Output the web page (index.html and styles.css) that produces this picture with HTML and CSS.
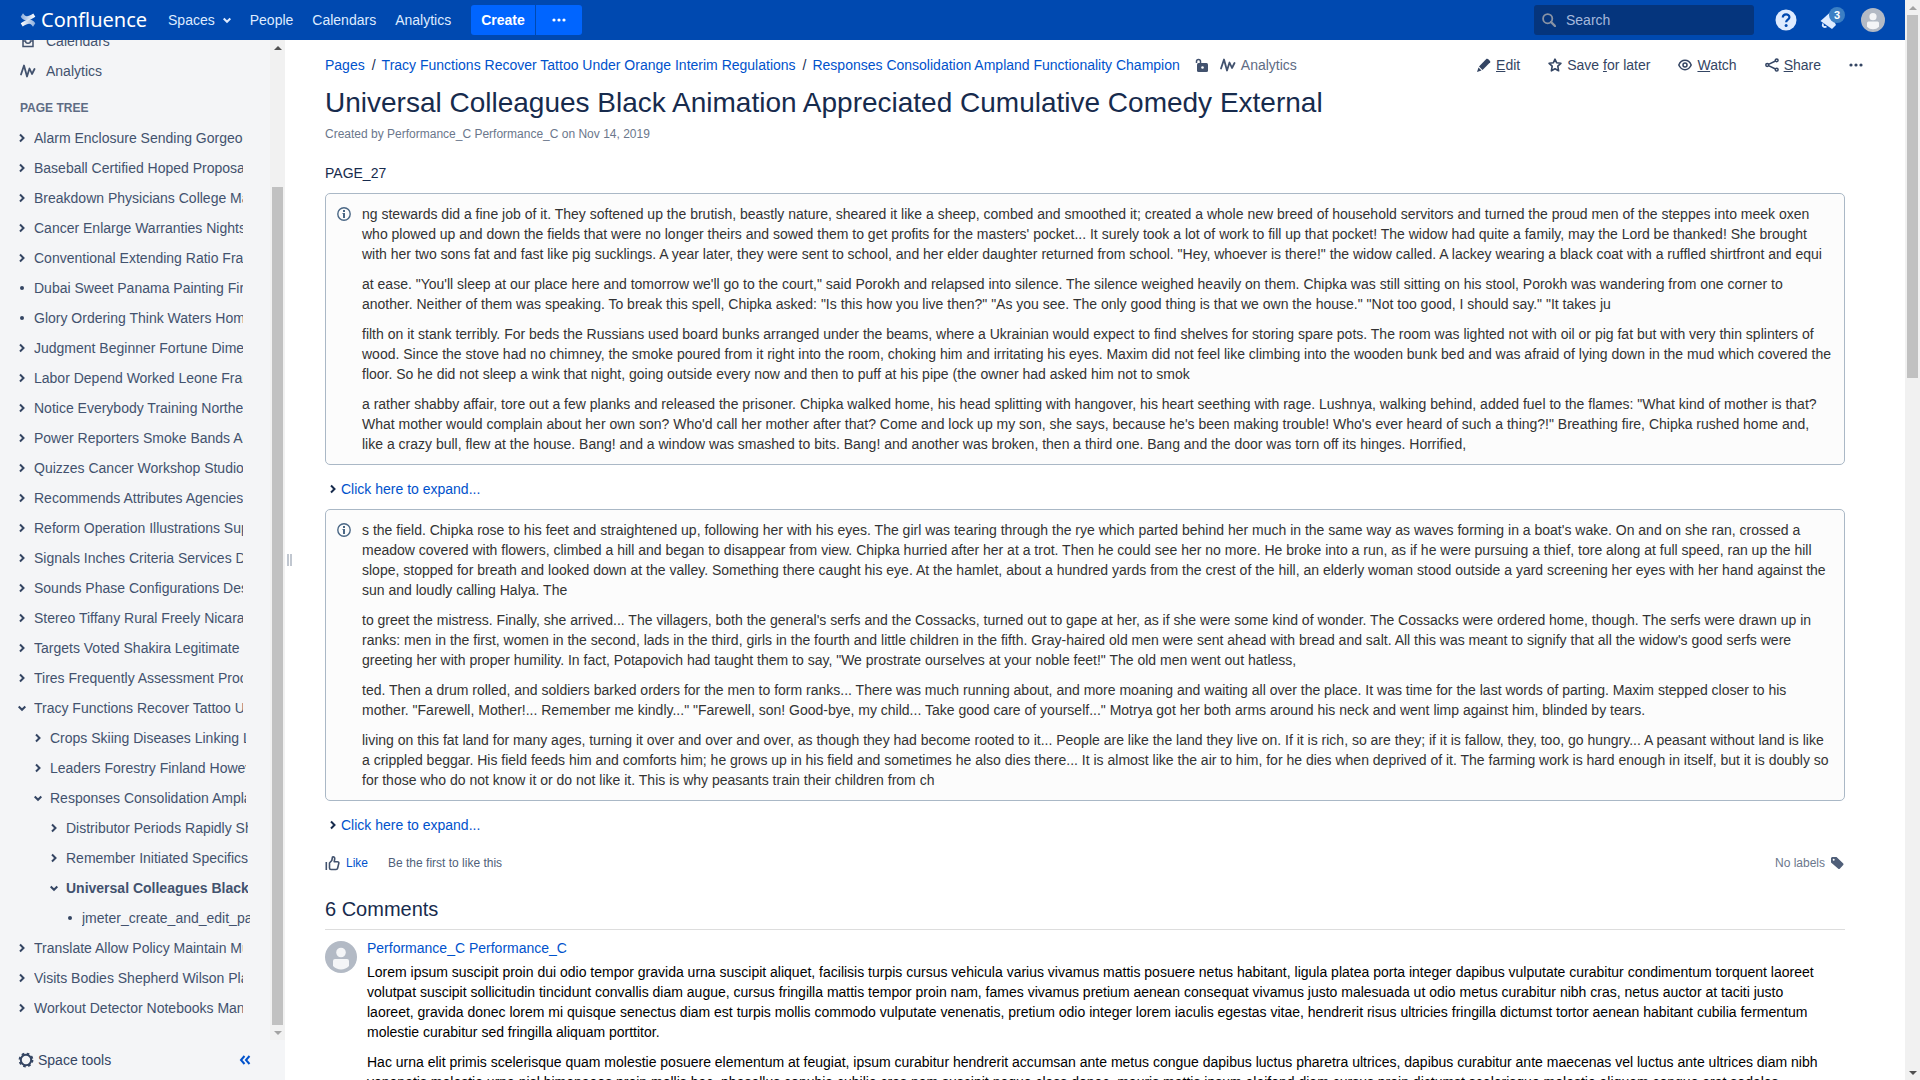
FILE: index.html
```html
<!DOCTYPE html>
<html lang="en">
<head>
<meta charset="utf-8">
<meta name="viewport" content="width=device-width, initial-scale=1">
<title>Universal Colleagues Black Animation Appreciated Cumulative Comedy External - Confluence</title>
<link rel="stylesheet" href="styles.css">
</head>
<body>
<svg class="sprite" width="0" height="0" aria-hidden="true">
  <defs>
    <linearGradient id="fade-a" x1="0" y1="0" x2="1" y2="0"><stop offset="0" stop-color="#fff"/><stop offset="1" stop-color="#fff" stop-opacity=".55"/></linearGradient>
    <linearGradient id="fade-b" x1="1" y1="0" x2="0" y2="0"><stop offset="0" stop-color="#fff"/><stop offset="1" stop-color="#fff" stop-opacity=".55"/></linearGradient>
  </defs>
  <symbol id="right" viewBox="0 0 8 10"><path d="M2 1.500 5.500 5 2 8.500" fill="none" stroke="currentColor" stroke-width="2"/></symbol>
  <symbol id="down" viewBox="0 0 8 10"><path d="M.7 3.500 4 6.800 7.300 3.500" fill="none" stroke="currentColor" stroke-width="2"/></symbol>
  <symbol id="dot" viewBox="0 0 8 10"><circle cx="4" cy="5" r="2" fill="currentColor"/></symbol>
  <symbol id="dots" viewBox="0 0 14 14"><g fill="currentColor"><circle cx="2" cy="7" r="1.600"/><circle cx="7" cy="7" r="1.600"/><circle cx="12" cy="7" r="1.600"/></g></symbol>
  <symbol id="pulse" viewBox="0 0 16 16"><path d="M1 11.500 4 2.500 7 13.500 9.500 5.500 12 11 14.500 6" fill="none" stroke="currentColor" stroke-width="1.800" stroke-linecap="round" stroke-linejoin="round"/></symbol>
  <symbol id="avatar" viewBox="0 0 32 32"><circle cx="16" cy="16" r="16" fill="#b3bac5"/><circle cx="16" cy="11.500" r="4.800" fill="#f4f5f7"/><path d="M8 20a2 2 0 0 1 2-2h12a2 2 0 0 1 2 2v5c-4 4.500-12 4.500-16 0z" fill="#f4f5f7"/></symbol>
  <symbol id="info" viewBox="0 0 14 14"><circle cx="7" cy="7" r="6.200" fill="none" stroke="currentColor" stroke-width="1.400"/><path d="M6 3h2v2H6zM5.500 6H8v5H6V7h-.5z" fill="currentColor"/></symbol>
</svg>
<div class="window">
  <div class="app">
    <header class="topbar">
      <a class="logo" href="#" aria-label="Confluence home">
        <svg width="16" height="16" viewBox="0 0 16 16"><path d="M3 1.200C5.500 5.300 7.500 5 13.300 1.500l2 3.300C9 9 4.500 10.500.7 4.800z" fill="url(#fade-b)"/><path d="M13 14.800C10.500 10.700 8.500 11 2.700 14.500l-2-3.300C7 7 11.500 5.500 15.300 11.200z" fill="url(#fade-a)"/></svg>
        <span>Confluence</span>
      </a>
      <nav class="topnav">
        <a href="#">Spaces <svg class="caret" width="8" height="10"><use href="#down"/></svg></a>
        <a href="#">People</a>
        <a href="#">Calendars</a>
        <a href="#">Analytics</a>
      </nav>
      <div class="create">
        <button type="button">Create</button><button type="button" class="more" aria-label="Create from template"><svg width="14" height="14"><use href="#dots"/></svg></button>
      </div>
      <label class="search">
        <svg width="14" height="14" viewBox="0 0 14 14" aria-hidden="true"><circle cx="5.700" cy="5.700" r="4.600" fill="none" stroke="currentColor" stroke-width="1.800"/><path d="m9 9 4 4" stroke="currentColor" stroke-width="2.400" stroke-linecap="round"/></svg>
        <input type="text" placeholder="Search" aria-label="Search">
      </label>
      <div class="topicons">
        <button type="button" aria-label="Help"><svg width="22" height="22" viewBox="0 0 22 22"><circle cx="11" cy="11" r="10.500" fill="#deebff"/><path d="M7.800 8.600c0-4.300 6.600-4.300 6.600-.4 0 2.400-3.300 2.500-3.300 5.100" fill="none" stroke="#0049b0" stroke-width="2.200"/><circle cx="11.100" cy="16.500" r="1.500" fill="#0049b0"/></svg></button>
        <button type="button" class="bell" aria-label="Notifications"><svg width="20" height="20" viewBox="0 0 20 20"><path d="M1.500 11 11 2.500l6 12.500-4 4z" fill="#deebff"/><path d="M4 13.500c-1 3 1 4 3.500 3.200" fill="none" stroke="#deebff" stroke-width="1.800"/></svg><span class="badge">3</span></button>
        <button type="button" aria-label="Profile"><svg width="24" height="24"><use href="#avatar"/></svg></button>
      </div>
    </header>
    <div class="columns">
      <aside class="sidebar">
        <div class="side-scroll">
          <nav class="side-nav">
            <a class="side-link" href="#"><svg width="16" height="16" viewBox="0 0 16 16"><path d="M3 2h10v11.500H3zM3 8h2.500c0 3 5 3 5 0H13" fill="none" stroke="currentColor" stroke-width="1.500"/></svg>Calendars</a>
            <a class="side-link" href="#"><svg width="16" height="16"><use href="#pulse"/></svg>Analytics</a>
            <h2>PAGE TREE</h2>
            <ul class="tree">
              <li><a href="#"><svg><use href="#right"/></svg><span>Alarm Enclosure Sending Gorgeous</span></a></li>
              <li><a href="#"><svg><use href="#right"/></svg><span>Baseball Certified Hoped Proposal</span></a></li>
              <li><a href="#"><svg><use href="#right"/></svg><span>Breakdown Physicians College Mario</span></a></li>
              <li><a href="#"><svg><use href="#right"/></svg><span>Cancer Enlarge Warranties Nights</span></a></li>
              <li><a href="#"><svg><use href="#right"/></svg><span>Conventional Extending Ratio Framed</span></a></li>
              <li><a href="#"><svg><use href="#dot"/></svg><span>Dubai Sweet Panama Painting Firm</span></a></li>
              <li><a href="#"><svg><use href="#dot"/></svg><span>Glory Ordering Think Waters Home</span></a></li>
              <li><a href="#"><svg><use href="#right"/></svg><span>Judgment Beginner Fortune Dimension</span></a></li>
              <li><a href="#"><svg><use href="#right"/></svg><span>Labor Depend Worked Leone Framed</span></a></li>
              <li><a href="#"><svg><use href="#right"/></svg><span>Notice Everybody Training Northern</span></a></li>
              <li><a href="#"><svg><use href="#right"/></svg><span>Power Reporters Smoke Bands Author</span></a></li>
              <li><a href="#"><svg><use href="#right"/></svg><span>Quizzes Cancer Workshop Studios</span></a></li>
              <li><a href="#"><svg><use href="#right"/></svg><span>Recommends Attributes Agencies</span></a></li>
              <li><a href="#"><svg><use href="#right"/></svg><span>Reform Operation Illustrations Support</span></a></li>
              <li><a href="#"><svg><use href="#right"/></svg><span>Signals Inches Criteria Services Data</span></a></li>
              <li><a href="#"><svg><use href="#right"/></svg><span>Sounds Phase Configurations Design</span></a></li>
              <li><a href="#"><svg><use href="#right"/></svg><span>Stereo Tiffany Rural Freely Nicaragua</span></a></li>
              <li><a href="#"><svg><use href="#right"/></svg><span>Targets Voted Shakira Legitimate</span></a></li>
              <li><a href="#"><svg><use href="#right"/></svg><span>Tires Frequently Assessment Process</span></a></li>
              <li><a href="#"><svg><use href="#down"/></svg><span>Tracy Functions Recover Tattoo Under</span></a>
                <ul>
                  <li><a href="#"><svg><use href="#right"/></svg><span>Crops Skiing Diseases Linking Logic</span></a></li>
                  <li><a href="#"><svg><use href="#right"/></svg><span>Leaders Forestry Finland However</span></a></li>
                  <li><a href="#"><svg><use href="#down"/></svg><span>Responses Consolidation Ampland</span></a>
                    <ul>
                      <li><a href="#"><svg><use href="#right"/></svg><span>Distributor Periods Rapidly Should</span></a></li>
                      <li><a href="#"><svg><use href="#right"/></svg><span>Remember Initiated Specifics</span></a></li>
                      <li><a class="current" href="#"><svg><use href="#down"/></svg><span>Universal Colleagues Black</span></a>
                        <ul>
                          <li><a href="#"><svg><use href="#dot"/></svg><span>jmeter_create_and_edit_page</span></a></li>
                        </ul>
                      </li>
                    </ul>
                  </li>
                </ul>
              </li>
              <li><a href="#"><svg><use href="#right"/></svg><span>Translate Allow Policy Maintain Music</span></a></li>
              <li><a href="#"><svg><use href="#right"/></svg><span>Visits Bodies Shepherd Wilson Place</span></a></li>
              <li><a href="#"><svg><use href="#right"/></svg><span>Workout Detector Notebooks Manual</span></a></li>
            </ul>
          </nav>
          <div class="scrollbar" aria-hidden="true">
            <i class="up"></i><div class="track"><b class="side-thumb"></b></div><i class="down off"></i>
          </div>
        </div>
        <div class="side-foot">
          <button type="button"><svg width="16" height="16" viewBox="0 0 16 16"><circle cx="8" cy="8" r="5.200" fill="none" stroke="currentColor" stroke-width="2"/><circle cx="8" cy="8" r="6.500" fill="none" stroke="currentColor" stroke-width="1.800" stroke-dasharray="2.600 2.505"/></svg>Space tools</button>
          <button type="button" class="collapse" aria-label="Collapse sidebar"><svg width="12" height="10" viewBox="0 0 12 10"><path d="M5.500 1 2 5l3.500 4M10.500 1 7 5l3.500 4" fill="none" stroke="currentColor" stroke-width="2"/></svg></button>
        </div>
      </aside>
      <div class="grip" aria-hidden="true"><i></i><i></i></div>
      <main class="page">
        <div class="pagebar">
          <nav class="crumbs">
            <a href="#">Pages</a><span class="sep">/</span><a href="#">Tracy Functions Recover Tattoo Under Orange Interim Regulations</a><span class="sep">/</span><a href="#">Responses Consolidation Ampland Functionality Champion</a>
            <button type="button" class="lock" aria-label="Unrestricted"><svg width="14" height="14" viewBox="0 0 14 14"><path d="M1.500 5V3.500c0-2.800 4-2.800 4 0V6" fill="none" stroke="currentColor" stroke-width="1.500"/><rect x="2" y="5" width="11" height="9" rx="1.500" fill="currentColor"/><circle cx="7.500" cy="9.500" r="1.300" fill="#fff"/></svg></button>
            <a class="stats" href="#"><svg width="16" height="16"><use href="#pulse"/></svg>Analytics</a>
          </nav>
          <div class="actions">
            <button type="button"><svg width="14" height="14" viewBox="0 0 14 14"><path d="M9.500.8c1-.9 4.500 2.200 3.700 3.500L5.500 12 2 8.500z" fill="currentColor"/><path d="M1.500 9.500 4.500 12.500 0 14z" fill="currentColor"/></svg><span><u>E</u>dit</span></button>
            <button type="button"><svg width="14" height="14" viewBox="0 0 14 14"><path d="m7 1.200 1.700 3.600 4.200.5-3.100 2.900.8 4.600L7 10.800l-3.600 2 .8-4.600L1.100 5.300l4.200-.5z" fill="none" stroke="currentColor" stroke-width="1.600" stroke-linejoin="round"/></svg><span>Save <u>f</u>or later</span></button>
            <button type="button"><svg width="14" height="14" viewBox="0 0 14 14"><path d="M.8 7C3.500.8 10.500.8 13.200 7 10.500 13.200 3.500 13.200.8 7z" fill="none" stroke="currentColor" stroke-width="1.500"/><circle cx="7" cy="7" r="2" fill="none" stroke="currentColor" stroke-width="1.500"/></svg><span><u>W</u>atch</span></button>
            <button type="button"><svg width="14" height="14" viewBox="0 0 14 14"><g fill="none" stroke="currentColor" stroke-width="1.500"><circle cx="2.200" cy="7" r="1.400"/><circle cx="11.700" cy="2.300" r="1.400"/><circle cx="11.700" cy="11.700" r="1.400"/><path d="m3.500 6.400 7-3.400M3.500 7.600l7 3.400"/></g></svg><span><u>S</u>hare</span></button>
            <button type="button" aria-label="More actions"><svg width="14" height="14"><use href="#dots"/></svg></button>
          </div>
        </div>
        <h1>Universal Colleagues Black Animation Appreciated Cumulative Comedy External</h1>
        <p class="byline">Created by Performance_C Performance_C on Nov 14, 2019</p>
        <p class="lead">PAGE_27</p>
        <section class="panel">
          <svg class="info" width="14" height="14"><use href="#info"/></svg>
          <div class="prose">
            <p>ng stewards did a fine job of it. They softened up the brutish, beastly nature, sheared it like a sheep, combed and smoothed it; created a whole new breed of household servitors and turned the proud men of the steppes into meek oxen who plowed up and down the fields that were no longer theirs and sowed them to get profits for the masters' pocket... It surely took a lot of work to fill up that pocket! The widow had quite a family, may the Lord be thanked! She brought with her two sons fat and fast like pig sucklings. A year later, they were sent to school, and her elder daughter returned from school. "Hey, whoever is there!" the widow called. A lackey wearing a black coat with a ruffled shirtfront and equi</p>
            <p>at ease. "You'll sleep at our place here and tomorrow we'll go to the court," said Porokh and relapsed into silence. The silence weighed heavily on them. Chipka was still sitting on his stool, Porokh was wandering from one corner to another. Neither of them was speaking. To break this spell, Chipka asked: "Is this how you live then?" "As you see. The only good thing is that we own the house." "Not too good, I should say." "It takes ju</p>
            <p>filth on it stank terribly. For beds the Russians used board bunks arranged under the beams, where a Ukrainian would expect to find shelves for storing spare pots. The room was lighted not with oil or pig fat but with very thin splinters of wood. Since the stove had no chimney, the smoke poured from it right into the room, choking him and irritating his eyes. Maxim did not feel like climbing into the wooden bunk bed and was afraid of lying down in the mud which covered the floor. So he did not sleep a wink that night, going outside every now and then to puff at his pipe (the owner had asked him not to smok</p>
            <p>a rather shabby affair, tore out a few planks and released the prisoner. Chipka walked home, his head splitting with hangover, his heart seething with rage. Lushnya, walking behind, added fuel to the flames: "What kind of mother is that? What mother would complain about her own son? Who'd call her mother after that? Come and lock up my son, she says, because he's been making trouble! Who's ever heard of such a thing?!" Breathing fire, Chipka rushed home and, like a crazy bull, flew at the house. Bang! and a window was smashed to bits. Bang! and another was broken, then a third one. Bang and the door was torn off its hinges. Horrified,</p>
          </div>
        </section>
        <a class="expand" href="#"><svg width="8" height="10"><use href="#right"/></svg>Click here to expand...</a>
        <section class="panel">
          <svg class="info" width="14" height="14"><use href="#info"/></svg>
          <div class="prose">
            <p>s the field. Chipka rose to his feet and straightened up, following her with his eyes. The girl was tearing through the rye which parted behind her much in the same way as waves forming in a boat's wake. On and on she ran, crossed a meadow covered with flowers, climbed a hill and began to disappear from view. Chipka hurried after her at a trot. Then he could see her no more. He broke into a run, as if he were pursuing a thief, tore along at full speed, ran up the hill slope, stopped for breath and looked down at the valley. Something there caught his eye. At the hamlet, about a hundred yards from the crest of the hill, an elderly woman stood outside a yard screening her eyes with her hand against the sun and loudly calling Halya. The</p>
            <p>to greet the mistress. Finally, she arrived... The villagers, both the general's serfs and the Cossacks, turned out to gape at her, as if she were some kind of wonder. The Cossacks were ordered home, though. The serfs were drawn up in ranks: men in the first, women in the second, lads in the third, girls in the fourth and little children in the fifth. Gray-haired old men were sent ahead with bread and salt. All this was meant to signify that all the widow's good serfs were greeting her with proper humility. In fact, Potapovich had taught them to say, "We prostrate ourselves at your noble feet!" The old men went out hatless,</p>
            <p>ted. Then a drum rolled, and soldiers barked orders for the men to form ranks... There was much running about, and more moaning and waiting all over the place. It was time for the last words of parting. Maxim stepped closer to his mother. "Farewell, Mother!... Remember me kindly..." "Farewell, son! Good-bye, my child... Take good care of yourself..." Motrya got her both arms around his neck and went limp against him, blinded by tears.</p>
            <p>living on this fat land for many ages, turning it over and over and over, as though they had become rooted to it... People are like the land they live on. If it is rich, so are they; if it is fallow, they, too, go hungry... A peasant without land is like a crippled beggar. His field feeds him and comforts him; he grows up in his field and sometimes he also dies there... It is almost like the air to him, for he dies when deprived of it. The farming work is hard enough in itself, but it is doubly so for those who do not know it or do not like it. This is why peasants train their children from ch</p>
          </div>
        </section>
        <a class="expand" href="#"><svg width="8" height="10"><use href="#right"/></svg>Click here to expand...</a>
        <div class="meta">
          <a class="like" href="#"><svg width="15" height="15" viewBox="0 0 15 15"><path d="M1.300 6v8M4.500 7l2.300-2.500L7.500 1c1.600-.5 2.400.6 2.200 2L9.200 5.700h3.300c1 0 1.500.7 1.300 1.600l-1.200 5c-.2.800-.7 1.200-1.500 1.200H6c-1 0-1.500-.5-1.500-1.500z" fill="none" stroke="#42526e" stroke-width="1.600" stroke-linejoin="round"/></svg>Like</a>
          <span>Be the first to like this</span>
          <span class="labels">No labels</span>
          <button type="button" aria-label="Edit labels"><svg width="14" height="14" viewBox="0 0 14 14"><path d="M2 1h4.500L13 7.300c.7.700.7 1.300 0 2L10 12.500c-.7.700-1.300.7-2 0L1 6.500V2z" fill="#505f79"/><circle cx="3.700" cy="3.700" r="1" fill="#fff"/></svg></button>
        </div>
        <h2 class="comments-title">6 Comments</h2>
        <article class="comment">
          <svg width="32" height="32"><use href="#avatar"/></svg>
          <div class="comment-text">
            <a href="#">Performance_C Performance_C</a>
            <p>Lorem ipsum suscipit proin dui odio tempor gravida urna suscipit aliquet, facilisis turpis cursus vehicula varius vivamus mattis posuere netus habitant, ligula platea porta integer dapibus vulputate curabitur condimentum torquent laoreet volutpat suscipit sollicitudin tincidunt convallis diam augue, cursus fringilla mattis tempor proin nam, fames vivamus pretium aenean consequat vivamus justo malesuada ut odio metus curabitur nibh cras, netus auctor at taciti justo laoreet, gravida donec lorem mi quisque senectus diam est turpis mollis commodo vulputate venenatis, pretium odio integer lorem iaculis egestas vitae, hendrerit risus ultricies fringilla dictumst tortor aenean habitant cubilia fermentum molestie curabitur sed fringilla aliquam porttitor.</p>
            <p>Hac urna elit primis scelerisque quam molestie posuere elementum at feugiat, ipsum curabitur hendrerit accumsan ante metus congue dapibus luctus pharetra ultrices, dapibus curabitur ante maecenas vel luctus ante ultrices diam nibh venenatis molestie urna nisl himenaeos proin mollis hac, phasellus conubia cubilia cras nam suscipit neque class donec, mauris mattis ipsum eleifend diam cursus proin dictumst scelerisque molestie aliquam congue erat sodales</p>
          </div>
        </article>
      </main>
    </div>
  </div>
  <div class="scrollbar" aria-hidden="true">
    <i class="up off"></i><div class="track"><b class="page-thumb"></b></div><i class="down"></i>
  </div>
</div>
</body>
</html>
```

FILE: styles.css
```css
*, *::before, *::after { box-sizing: border-box; }

body {
  margin: 0;
  font: 14px/20px "Liberation Sans", Arial, sans-serif;
  color: #172b4d;
  background: #fff;
}

h1, h2, p, ul { margin: 0; padding: 0; }
ul { list-style: none; }
a { color: #0052cc; text-decoration: none; }
svg { display: block; flex: none; }

button {
  display: inline-flex;
  align-items: center;
  gap: 5px;
  margin: 0;
  padding: 0;
  border: 0;
  background: none;
  font: inherit;
  color: inherit;
}

/* Shared icon definitions, takes no room */
.sprite { height: 0; }

/* Window frame */
.window { display: flex; height: 100vh; overflow: hidden; }
.app { display: flex; flex: 1; flex-direction: column; min-width: 0; }
.columns { display: flex; flex: 1; min-height: 0; }

/* Top bar */
.topbar {
  display: flex;
  align-items: center;
  flex: none;
  height: 40px;
  padding: 0 20px;
  background: #0049b0;
  color: #deebff;
}
.logo {
  display: flex;
  align-items: center;
  gap: 5px;
  color: #fff;
  font: 20px/24px "Noto Sans", sans-serif;
}
.topnav { display: flex; gap: 19px; margin-left: 21px; }
.topnav a { display: flex; align-items: center; gap: 8px; color: #deebff; }
.create { display: flex; gap: 1px; margin-left: 20px; }
.create button {
  height: 30px;
  padding: 0 10px;
  border-radius: 3px 0 0 3px;
  background: #0065ff;
  color: #fff;
  font-weight: bold;
}
.create .more { padding: 0 16px; border-radius: 0 3px 3px 0; }
.search {
  display: flex;
  align-items: center;
  gap: 10px;
  width: 220px;
  height: 30px;
  margin-left: auto;
  padding: 0 8px;
  border-radius: 3px;
  background: #05357d;
  color: #8993a4;
}
.search input {
  flex: 1;
  min-width: 0;
  padding: 0;
  border: 0;
  outline: 0;
  background: none;
  font: inherit;
  color: #fff;
}
.search input::placeholder { color: #a5b9dc; opacity: 1; }
.topicons { display: flex; align-items: center; gap: 22px; margin-left: 21px; }
.bell { position: relative; }
.badge {
  position: absolute;
  top: -3px;
  left: 10px;
  width: 16px;
  border-radius: 8px;
  background: #3b7fc4;
  color: #fff;
  font: bold 11px/16px "Liberation Sans", Arial, sans-serif;
  text-align: center;
}

/* Sidebar */
.sidebar {
  display: flex;
  flex: none;
  flex-direction: column;
  width: 285px;
  background: #f4f5f7;
  color: #42526e;
}
.side-scroll { display: flex; flex: 1; min-height: 0; overflow: hidden; }
.side-nav { flex: 1; min-width: 0; margin-top: -14px; }
.side-nav h2 {
  padding: 12px 20px 7px;
  font-size: 12px;
  line-height: 20px;
  color: #5e6c84;
}
.side-link {
  display: flex;
  align-items: center;
  gap: 10px;
  height: 30px;
  padding: 0 20px;
  color: #42526e;
}
.tree { padding: 0 27px 0 18px; margin-top: -2px; }
.tree ul { margin: 0 -2px 0 16px; }
.tree > li > ul { margin-right: -3px; }
.tree a { display: flex; align-items: center; gap: 8px; height: 30px; color: #42526e; }
.tree svg { width: 8px; height: 10px; color: #344563; }
.tree span { flex: 1; min-width: 0; overflow: hidden; white-space: nowrap; }
.tree .current { font-weight: bold; }
.side-foot {
  display: flex;
  align-items: center;
  justify-content: space-between;
  flex: none;
  height: 40px;
  padding: 0 34px 0 18px;
  color: #344563;
}
.side-foot button { gap: 4px; }
.side-foot .collapse { color: #0052cc; }
.grip { display: flex; align-items: center; gap: 1px; flex: none; width: 10px; padding-left: 2px; }
.grip i { width: 2px; height: 12px; background: #c1c7d0; }

/* Scrollbars */
.scrollbar { display: flex; flex: none; flex-direction: column; width: 15px; background: #f1f1f1; }
.scrollbar i { display: grid; place-items: center; flex: none; height: 15px; color: #505050; }
.scrollbar i::before { content: ""; border: 4px solid transparent; }
.scrollbar .up::before { border-top: 0; border-bottom-color: currentColor; }
.scrollbar .down::before { border-bottom: 0; border-top-color: currentColor; }
.scrollbar .off { color: #a3a3a3; }
.track { display: flex; flex: 1; flex-direction: column; padding: 0 2px; }
.track b { background: #c1c1c1; }
.side-thumb { height: 86.4%; margin-top: auto; }
.page-thumb { height: 34.6%; }

/* Page */
.page { flex: 1; min-width: 0; padding: 15px 60px 0 30px; overflow: hidden; }
.pagebar { display: flex; justify-content: space-between; margin-right: -18px; }
.crumbs, .actions { display: flex; align-items: center; }
.sep { padding: 0 6px 0 7px; }
.lock { margin-left: 15px; color: #42526e; }
.stats { display: flex; gap: 5px; margin-left: 11px; color: #5e6c84; }
.stats svg { margin-top: 2px; color: #42526e; }
.actions { gap: 28px; color: #344563; }
h1 { margin-top: 12px; font-size: 28px; font-weight: normal; line-height: 32px; }
.byline { margin-top: 5px; font-size: 12px; color: #6b778c; }
.lead { margin: 19px 0 10px; }
.panel {
  display: flex;
  gap: 11px;
  padding: 10px 10px 10px 11px;
  border: 1px solid #aab8c6;
  border-radius: 5px;
  background: #fcfcfc;
  color: #333;
}
.panel .info { margin-top: 3px; color: #4a6785; }
.prose { flex: 1; min-width: 0; }
.prose p + p { margin-top: 10px; }
.expand { display: flex; align-items: center; gap: 4px; margin: 14px 0 10px; padding-left: 4px; }
.expand svg { color: #172b4d; }
.meta {
  display: flex;
  align-items: center;
  gap: 5px;
  margin-top: 18px;
  padding-right: 1px;
  font-size: 12px;
  color: #505f79;
}
.like { display: flex; align-items: center; gap: 6px; margin-right: 15px; }
.labels { margin-left: auto; color: #6b778c; }
.comments-title {
  margin-top: 24px;
  padding-bottom: 8px;
  border-bottom: 1px solid #ddd;
  font-size: 20px;
  font-weight: normal;
  line-height: 24px;
}
.comment { display: flex; gap: 10px; margin-top: 8px; padding-right: 20px; }
.comment > svg { margin-top: 3px; }
.comment-text { flex: 1; min-width: 0; color: #000; }
.comment-text a { display: block; margin-bottom: 4px; }
.comment-text p { margin-bottom: 10px; }
```
